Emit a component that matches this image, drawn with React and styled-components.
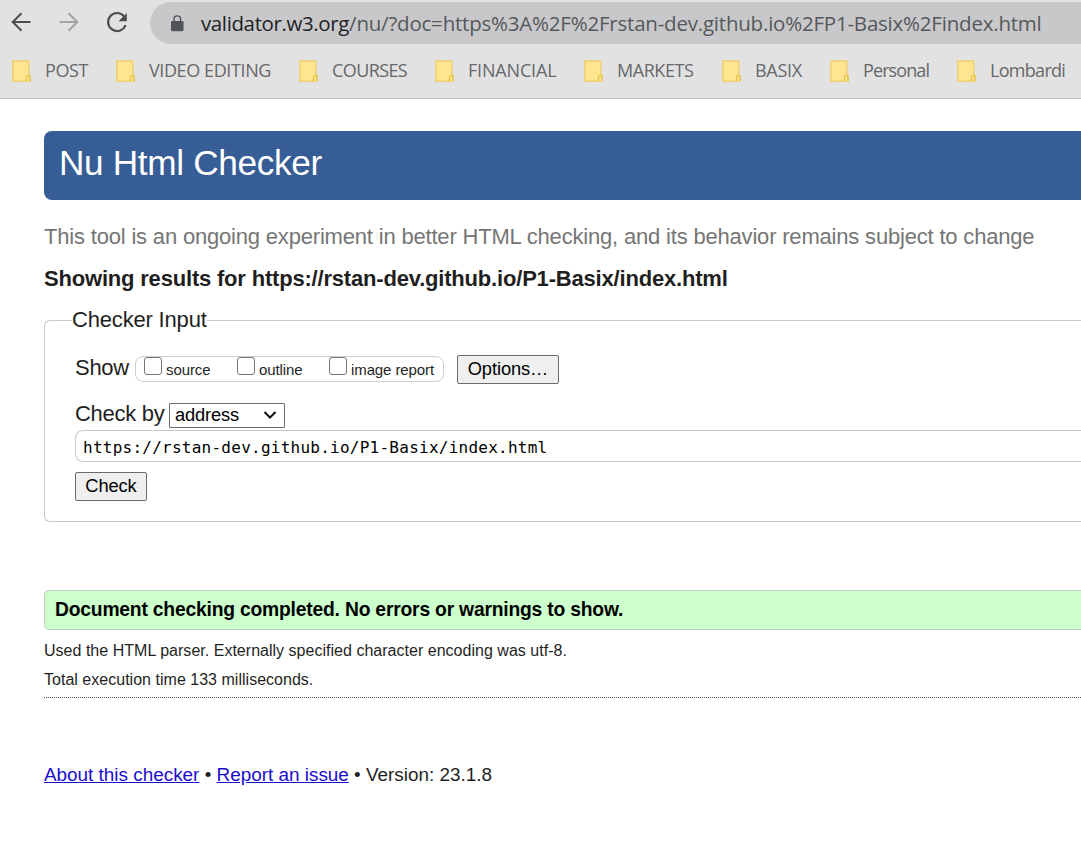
import React from 'react';
import styled, { createGlobalStyle } from 'styled-components';

const GlobalStyle = createGlobalStyle`
  * { box-sizing: border-box; }
  html, body { margin: 0; padding: 0; background: #fff; overflow: hidden; }
  body { font-family: Arial, "Liberation Sans", sans-serif; color: #1f1f1f; }
`;

const Window = styled.div`
  width: 100vw;
  height: 100vh;
  overflow: hidden;
  white-space: nowrap;
`;

const BrowserChrome = styled.header`
  height: 99px;
  background: #e2e2e2;
  border-bottom: 1px solid #bcbcbe;
  font-family: "Open Sans", "Noto Sans", sans-serif;
`;

const Toolbar = styled.div`
  display: flex;
  height: 44px;
  padding-top: 2px;
`;

const NavButtons = styled.div`
  display: flex;
  gap: 24px;
  width: 150px;
  padding: 8px 0 0 9px;
`;

const NavIcon = styled.svg`
  width: 24px;
  height: 24px;
  flex: none;
  fill: none;
  stroke: ${(p) => p.$color || '#4b4e50'};
  stroke-width: 2;
`;

const AddressBar = styled.div`
  display: flex;
  align-items: center;
  flex: 1;
  height: 42px;
  padding-left: 21px;
  border-radius: 21px 0 0 21px;
  background: #c8c8ca;
`;

const LockIcon = styled.svg`
  width: 13px;
  height: 17px;
  margin-right: 17px;
`;

const Url = styled.span`
  font-size: 20.5px;
  line-height: 42px;
  letter-spacing: ${(p) => p.$spacing}px;
  color: ${(p) => p.$color};
`;

const BookmarkBar = styled.nav`
  display: flex;
  height: 54px;
`;

const Bookmark = styled.div`
  display: flex;
  align-items: center;
  flex: none;
  width: ${(p) => p.$width}px;
  padding-left: 12px;
`;

const FolderIcon = styled.svg`
  width: 19px;
  height: 23px;
  margin-right: 14px;
  flex: none;
`;

const BookmarkLabel = styled.span`
  padding-bottom: 2px;
  font-size: 18px;
  letter-spacing: ${(p) => p.$spacing}px;
  color: #66686a;
`;

const Page = styled.main`
  padding: 32px 0 0 44px;
`;

const Banner = styled.h1`
  height: 69px;
  margin: 0;
  padding-left: 15px;
  border-radius: 8px 0 0 8px;
  background: #365d95;
  color: #fff;
  font-size: 35.2px;
  font-weight: 400;
  line-height: 64px;
  letter-spacing: -0.33px;
`;

const Intro = styled.p`
  margin: 23px 0 0;
  color: #757575;
  font-size: 22px;
  line-height: 28px;
  letter-spacing: -0.185px;
`;

const ResultsTitle = styled.h2`
  margin: 14px 0 0;
  font-size: 22px;
  line-height: 28px;
  letter-spacing: -0.19px;
`;

const CheckerForm = styled.fieldset`
  height: 216px;
  margin: 13px 0 0;
  padding: 0 0 0 30px;
  border: 1px solid #c8c8c8;
  border-right: 0;
  border-radius: 6px 0 0 6px;
`;

const Legend = styled.legend`
  margin-left: -3px;
  padding: 0;
  font-size: 22px;
  line-height: 28px;
  letter-spacing: -0.18px;
`;

const Row = styled.div`
  display: flex;
  align-items: center;
  height: 30px;
  margin-top: ${(p) => p.$top || 0}px;
`;

const RowLabel = styled.span`
  width: ${(p) => p.$width}px;
  font-size: 22px;
  line-height: 26px;
  padding-bottom: 2px;
  letter-spacing: -0.27px;
`;

const OptionGroup = styled.div`
  display: flex;
  width: 309px;
  height: 26px;
  margin-right: 13px;
  padding-left: 8px;
  border: 1px solid #cfcfcf;
  border-radius: 8px;
`;

const Option = styled.label`
  display: flex;
  width: ${(p) => p.$width}px;
  font-size: 15px;
  line-height: 26px;
  letter-spacing: -0.1px;
`;

const Checkbox = styled.input`
  appearance: none;
  width: 18px;
  height: 18px;
  flex: none;
  margin: 0 4px 0 0;
  border: 1.5px solid #767676;
  border-radius: 3px;
  background: #fff;
`;

const Button = styled.button`
  width: ${(p) => p.$width}px;
  height: 29px;
  padding: 0;
  border: 1px solid #6b6b6b;
  border-radius: 2px;
  background: #efefef;
  color: #000;
  font: 18.3px/24px Arial, "Liberation Sans", sans-serif;
  letter-spacing: -0.1px;
`;

const Select = styled.div`
  display: flex;
  align-items: center;
  justify-content: space-between;
  width: 116px;
  height: 25px;
  padding: 0 7px 1px 5px;
  border: 1px solid #6b6b6b;
  border-radius: 1px;
  color: #000;
  font-size: 18.3px;
  letter-spacing: -0.15px;
`;

const AddressField = styled.div`
  height: 32px;
  padding-left: 7px;
  border: 1px solid #c8c8c8;
  border-right: 0;
  border-radius: 8px 0 0 8px;
  color: #000;
  font: 16px/34px "DejaVu Sans Mono", monospace;
  letter-spacing: 0.25px;
`;

const Success = styled.p`
  height: 40px;
  margin: 68px 0 0;
  padding-left: 10px;
  border: 1px solid #bfccbf;
  border-right: 0;
  border-radius: 5px 0 0 5px;
  background: #ccffcc;
  color: #000;
  font-size: 19.3px;
  font-weight: 700;
  line-height: 37px;
  letter-spacing: -0.2px;
`;

const Details = styled.div`
  height: 68px;
  padding-top: 6px;
  border-bottom: 1px dotted #555;
  font-size: 16px;
  line-height: 29px;
  letter-spacing: 0.02px;
`;

const Footer = styled.footer`
  margin-top: 64px;
  font-size: 18.9px;
  line-height: 26px;
`;

const Link = styled.a`
  color: #1a0dcc;
  text-decoration: underline;
`;

const bookmarks = [
  { label: 'POST', width: 104, spacing: -0.4 },
  { label: 'VIDEO EDITING', width: 183, spacing: -0.4 },
  { label: 'COURSES', width: 136, spacing: -0.6 },
  { label: 'FINANCIAL', width: 149, spacing: -0.17 },
  { label: 'MARKETS', width: 138, spacing: -0.45 },
  { label: 'BASIX', width: 108, spacing: -0.3 },
  { label: 'Personal', width: 127, spacing: -0.9 },
  { label: 'Lombardi', width: 130, spacing: -0.7 },
];

function Folder() {
  return (
    <FolderIcon viewBox="0 0 19 23">
      <path d="M.8 1h16v14h1.200v6.300H.8z" fill="#ffe590" stroke="#efd06c" strokeWidth="1.400" />
      <path d="M14.500 21v-4q0-1.500 1.700-1.500t1.700 1.500v4" fill="#ffe590" stroke="#e4bf45" strokeWidth="1.200" />
    </FolderIcon>
  );
}

export default function App() {
  return (
    <Window>
      <GlobalStyle />
      <BrowserChrome>
        <Toolbar>
          <NavButtons>
            <NavIcon viewBox="0 0 24 24"><path d="M21.500 12H4M12.500 3.200 3.700 12l8.800 8.800" /></NavIcon>
            <NavIcon viewBox="0 0 24 24" $color="#a2a3a5"><path d="M2.500 12H20M11.500 3.200l8.800 8.800-8.800 8.800" /></NavIcon>
            <NavIcon viewBox="0 0 24 24">
              <path d="M19 6.200A9 9 0 1 0 20.600 15" strokeWidth="2.200" />
              <path d="M21.800 3v8.300h-8.300z" fill="#4b4e50" stroke="none" />
            </NavIcon>
          </NavButtons>
          <AddressBar>
            <LockIcon viewBox="0 0 13 17">
              <rect x="0" y="6" width="12.500" height="10.300" rx="1.300" fill="#505357" />
              <path d="M3 7V4.200a3.300 3.300 0 0 1 6.600 0V7" fill="none" stroke="#505357" strokeWidth="1.400" />
            </LockIcon>
            <Url $color="#202124" $spacing={-0.38}>validator.w3.org</Url>
            <Url $color="#55585b" $spacing={-0.21}>/nu/?doc=https%3A%2F%2Frstan-dev.github.io%2FP1-Basix%2Findex.html</Url>
          </AddressBar>
        </Toolbar>
        <BookmarkBar>
          {bookmarks.map((b) => (
            <Bookmark key={b.label} $width={b.width}>
              <Folder />
              <BookmarkLabel $spacing={b.spacing}>{b.label}</BookmarkLabel>
            </Bookmark>
          ))}
        </BookmarkBar>
      </BrowserChrome>
      <Page>
        <Banner>Nu Html Checker</Banner>
        <Intro>This tool is an ongoing experiment in better HTML checking, and its behavior remains subject to change</Intro>
        <ResultsTitle>Showing results for https://rstan-dev.github.io/P1-Basix/index.html</ResultsTitle>
        <CheckerForm>
          <Legend>Checker Input</Legend>
          <Row $top={20}>
            <RowLabel $width={60}>Show</RowLabel>
            <OptionGroup>
              <Option $width={93}><Checkbox type="checkbox" />source</Option>
              <Option $width={92}><Checkbox type="checkbox" />outline</Option>
              <Option $width={110}><Checkbox type="checkbox" />image report</Option>
            </OptionGroup>
            <Button $width={102}>Options…</Button>
          </Row>
          <Row $top={16}>
            <RowLabel $width={94}>Check by</RowLabel>
            <Select>
              address
              <svg width="14" height="10" viewBox="0 0 14 10"><path d="m1.500 2 5.500 5.500L12.500 2" fill="none" stroke="#111" strokeWidth="2" /></svg>
            </Select>
          </Row>
          <AddressField>https://rstan-dev.github.io/P1-Basix/index.html</AddressField>
          <Row $top={9}>
            <Button $width={72}>Check</Button>
          </Row>
        </CheckerForm>
        <Success>Document checking completed. No errors or warnings to show.</Success>
        <Details>
          <div>Used the HTML parser. Externally specified character encoding was utf-8.</div>
          <div>Total execution time 133 milliseconds.</div>
        </Details>
        <Footer>
          <Link>About this checker</Link> • <Link>Report an issue</Link> • Version: 23.1.8
        </Footer>
      </Page>
    </Window>
  );
}
